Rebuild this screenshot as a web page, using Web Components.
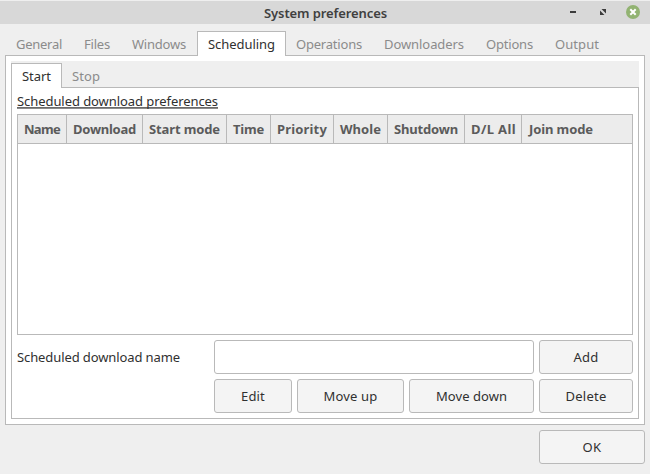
<!DOCTYPE html>
<html lang="en">
<head>
<meta charset="utf-8">
<title>System preferences</title>
<style>
html,body{margin:0;padding:0;background:#efefef;overflow:hidden}
body{width:650px;height:474px;font:13px/18px "Noto Sans","Open Sans",sans-serif;color:#303030}
</style>
</head>
<body>
<prefs-window></prefs-window>
<script>
const define=(name,html,setup)=>customElements.define(name,class extends HTMLElement{
  connectedCallback(){
    if(this.shadowRoot)return;
    const t=document.createElement('template');
    t.innerHTML=html;
    this.attachShadow({mode:'open'}).append(t.content.cloneNode(true));
    if(setup)setup(this,this.shadowRoot);
  }
});

/* A one-line label whose tracking is tuned to a given width. */
define('ui-label',`<style>:host{display:inline-block;white-space:pre}span{display:inline-block}</style><span></span>`,(el,root)=>{
  const s=root.querySelector('span'),w=+el.getAttribute('w');
  s.textContent=el.getAttribute('text');
  el.style.width=w+'px';
  const n=s.textContent.length;
  s.style.letterSpacing=((w-s.getBoundingClientRect().width)/n)+'px';
});

define('title-bar',`<style>
:host{display:grid;grid-template-columns:264px 123px 1fr;height:23px;margin-top:1px;background:#d8d8d8;color:#404040;font-weight:600}
ui-label{padding-top:3px}
.ctl{display:flex;justify-content:flex-end;padding-right:9px}
svg{display:block}
</style><span></span><ui-label w="123" text="System preferences"></ui-label>
<div class="ctl"><svg width="76" height="23" viewBox="565 1 76 23">
<rect x="570" y="11" width="6" height="2" fill="#3c3c3c"/>
<path d="M601.5 9h4.5v4.5zM600 10.500l4.500 4.500h-4.500z" fill="#3c3c3c"/>
<circle cx="633" cy="12" r="7" fill="#92b372"/>
<path d="M630.300 9.300l5.400 5.400m0-5.400l-5.400 5.400" stroke="#fff" stroke-width="2"/>
</svg></div>`);

define('ui-tab',`<style>
:host{display:block;box-sizing:border-box;height:100%;padding:3px 10px 0;border:1px solid transparent;border-bottom:0;color:#8b8b8b}
:host([active]){background:#fff;border-color:#b9b9b9;color:#303030;height:calc(100% + 1px)}
</style><slot></slot>`);

define('tab-strip',`<style>:host{display:flex;box-sizing:border-box;background:#efefef}</style><slot></slot>`);

define('ui-button',`<style>:host{display:flex;align-items:center;justify-content:center;box-sizing:border-box;height:34px;border:1px solid #b9b9b9;border-radius:3px;background:#f4f4f4}</style><slot></slot>`);

define('ui-entry',`<style>:host{display:block;box-sizing:border-box;height:34px;border:1px solid #b9b9b9;border-radius:3px;background:#fff}</style>`);

define('schedule-table',`<style>
:host{display:block;box-sizing:border-box;height:221px;border:1px solid #b9b9b9;background:#fff}
.head{display:grid;grid-template-columns:49px 76px 84px 44px 63px 54px 77px 57px 1fr;height:28px;background:#ececec;border-bottom:1px solid #b9b9b9;color:#5b5b5b;font-weight:700}
.head div{border-right:1px solid #b9b9b9;padding:5px 0 0 6px}
.head div:last-child{border:0;padding-left:7px}
</style><div class="head"></div>`,(el,root)=>{
  const cols=[['Name',36],['Download',63],['Start mode',71],['Time',31],['Priority',50],['Whole',41],['Shutdown',64],['D/L All',45],['Join mode',64]];
  root.querySelector('.head').innerHTML=cols.map(([t,w])=>`<div><ui-label w="${w}" text="${t}"></ui-label></div>`).join('');
});

define('schedule-page',`<style>
:host{display:block;box-sizing:border-box;height:332px;border:1px solid #b9b9b9;padding:5px;background:#fff}
.caption{display:block;height:21px;width:201px;line-height:17px}
.caption i{display:block;height:1px;background:#6a6a6a;border-bottom:1px solid #8a8a8a;margin-top:-3px}
.caption ui-label{display:block}
.form{display:grid;grid-template-columns:192px 78px 107px 125px 94px;column-gap:5px;row-gap:5px;margin-top:5px;align-items:center}
</style>
<div class="caption"><ui-label w="201" text="Scheduled download preferences"></ui-label><i></i></div>
<schedule-table></schedule-table>
<div class="form">
<ui-label w="163" text="Scheduled download name"></ui-label>
<ui-entry style="grid-column:2/5"></ui-entry>
<ui-button><ui-label w="25" text="Add"></ui-label></ui-button>
<ui-button style="grid-column:2"><ui-label w="24" text="Edit"></ui-label></ui-button>
<ui-button><ui-label w="54" text="Move up"></ui-label></ui-button>
<ui-button><ui-label w="71" text="Move down"></ui-label></ui-button>
<ui-button><ui-label w="41" text="Delete"></ui-label></ui-button>
</div>`);

define('prefs-window',`<style>
:host{display:flow-root;width:650px;height:474px;background:#efefef}
.main{height:31px;padding:7px 0 0 5px}
.frame{box-sizing:border-box;width:640px;height:370px;margin-left:5px;border:1px solid #b9b9b9;background:#fff;padding:5px}
.sub{height:26px;padding-top:2px}
ui-tab[active]{margin-right:-1px}
.foot{display:flex;justify-content:flex-end;padding:5px 5px 0 0}
.foot ui-button{width:106px}
</style>
<title-bar></title-bar>
<tab-strip class="main">
<ui-tab><ui-label w="46" text="General"></ui-label></ui-tab>
<ui-tab><ui-label w="26" text="Files"></ui-label></ui-tab>
<ui-tab><ui-label w="54" text="Windows"></ui-label></ui-tab>
<ui-tab active><ui-label w="67" text="Scheduling"></ui-label></ui-tab>
<ui-tab><ui-label w="66" text="Operations"></ui-label></ui-tab>
<ui-tab><ui-label w="80" text="Downloaders"></ui-label></ui-tab>
<ui-tab><ui-label w="47" text="Options"></ui-label></ui-tab>
<ui-tab><ui-label w="44" text="Output"></ui-label></ui-tab>
</tab-strip>
<div class="frame">
<tab-strip class="sub">
<ui-tab active><ui-label w="29" text="Start"></ui-label></ui-tab>
<ui-tab><ui-label w="28" text="Stop"></ui-label></ui-tab>
</tab-strip>
<schedule-page></schedule-page>
</div>
<div class="foot"><ui-button><ui-label w="19" text="OK"></ui-label></ui-button></div>`);
</script>
</body>
</html>
